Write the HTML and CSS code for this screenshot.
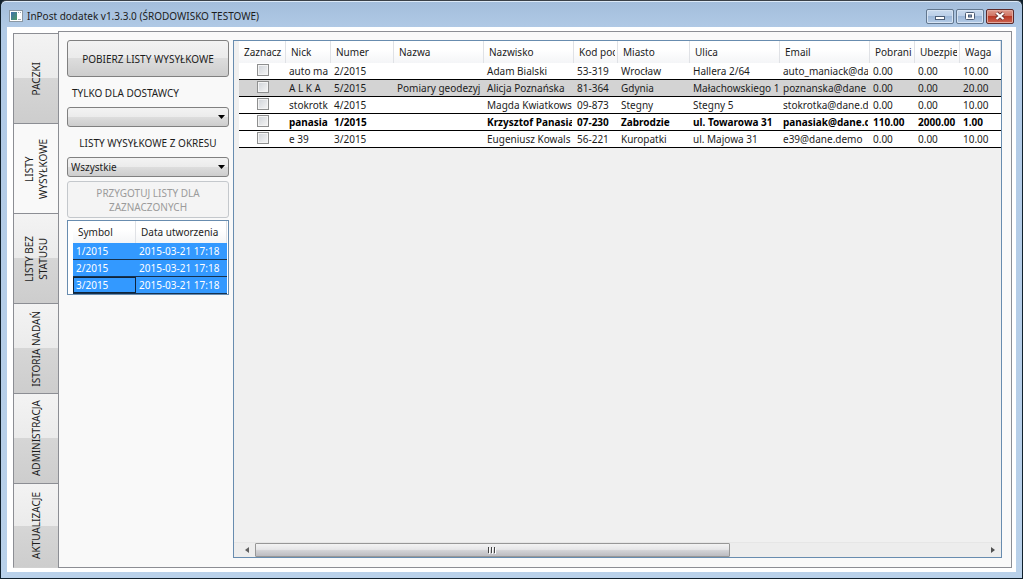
FILE: index.html
```html
<!DOCTYPE html>
<html lang="pl">
<head>
<meta charset="utf-8">
<title>InPost dodatek</title>
<link rel="stylesheet" href="styles.css">
</head>
<body>
<div class="window">
  <header class="titlebar">
    <svg class="app-icon" width="14" height="12" viewBox="0 0 14 12" aria-hidden="true">
      <defs><linearGradient id="app" x1="0" y1="0" x2="1" y2="1"><stop offset="0" stop-color="#3f6fae"/><stop offset="1" stop-color="#4c9a62"/></linearGradient></defs>
      <rect x=".5" y=".5" width="13" height="11" fill="#fff" stroke="#8b98a4"/>
      <rect x="2" y="2" width="6" height="8" fill="url(#app)"/>
      <path d="M9 2h1v1H9zM11 2h1v1h-1zM9 9h3v1H9z" fill="#9aa7b5"/>
    </svg>
    <h1 class="title">InPost dodatek v1.3.3.0 (ŚRODOWISKO TESTOWE)</h1>
    <div class="window-buttons">
      <button class="window-button" aria-label="Minimalizuj"><svg width="12" height="10" viewBox="0 0 12 10"><rect x="1.5" y="5.5" width="9" height="3" fill="#fff" stroke="#4b5d76"/></svg></button>
      <button class="window-button" aria-label="Maksymalizuj"><svg width="12" height="10" viewBox="0 0 12 10"><rect x="1.5" y="1.5" width="9" height="7" rx="1" fill="#fff" stroke="#4b5d76"/><rect x="4.5" y="4" width="3" height="2" fill="#8fa9cb" stroke="#4b5d76"/></svg></button>
      <button class="window-button close" aria-label="Zamknij"><svg width="12" height="10" viewBox="0 0 12 10"><path d="M2.500 2l7 6M9.500 2l-7 6" stroke="#6d3432" stroke-width="4"/><path d="M2.500 2l7 6M9.500 2l-7 6" stroke="#fff" stroke-width="2.200"/></svg></button>
    </div>
  </header>
  <main class="client">
    <nav class="tabs" role="tablist">
      <button class="tab" role="tab"><span class="tab-text">PACZKI</span></button>
      <button class="tab selected" role="tab" aria-selected="true"><span class="tab-text">LISTY<br>WYSYŁKOWE</span></button>
      <button class="tab" role="tab"><span class="tab-text">LISTY BEZ<br>STATUSU</span></button>
      <button class="tab" role="tab"><span class="tab-text">ISTORIA NADAŃ</span></button>
      <button class="tab" role="tab"><span class="tab-text">ADMINISTRACJA</span></button>
      <button class="tab" role="tab"><span class="tab-text">AKTUALIZACJE</span></button>
    </nav>
    <section class="page">
      <aside class="sidebar">
        <button class="action">POBIERZ LISTY WYSYŁKOWE</button>
        <label class="field-label" for="supplier">TYLKO DLA DOSTAWCY</label>
        <div class="combo"><select id="supplier"><option></option></select></div>
        <label class="field-label centered" for="period">LISTY WYSYŁKOWE Z OKRESU</label>
        <div class="combo"><select id="period"><option>Wszystkie</option></select></div>
        <button class="action prepare" disabled>PRZYGOTUJ LISTY DLA ZAZNACZONYCH</button>
        <div class="list-box">
          <table class="grid list">
            <colgroup><col class="w-symbol"><col></colgroup>
            <thead><tr><th>Symbol</th><th>Data utworzenia</th></tr></thead>
            <tbody>
              <tr><td>1/2015</td><td>2015-03-21 17:18</td></tr>
              <tr><td>2/2015</td><td>2015-03-21 17:18</td></tr>
              <tr><td class="current">3/2015</td><td>2015-03-21 17:18</td></tr>
            </tbody>
          </table>
        </div>
      </aside>
      <div class="grid-box">
        <div class="grid-area">
          <table class="grid shipments">
            <colgroup><col class="w-check"><col class="w-small"><col class="w-number"><col class="w-wide"><col class="w-wide"><col class="w-code"><col class="w-city"><col class="w-wide"><col class="w-wide"><col class="w-small"><col class="w-small"><col></colgroup>
            <thead><tr><th>Zaznacz</th><th>Nick</th><th>Numer</th><th>Nazwa</th><th>Nazwisko</th><th><div class="clip">Kod poc</div></th><th>Miasto</th><th>Ulica</th><th>Email</th><th><div class="clip">Pobrani</div></th><th><div class="clip">Ubezpie</div></th><th>Waga</th></tr></thead>
            <tbody>
              <tr><td class="check"><input type="checkbox" aria-label="Zaznacz 2/2015"></td><td><div class="clip">auto ma</div></td><td>2/2015</td><td></td><td>Adam Bialski</td><td>53-319</td><td>Wrocław</td><td>Hallera 2/64</td><td><div class="clip">auto_maniack@da</div></td><td>0.00</td><td>0.00</td><td>10.00</td></tr>
              <tr class="shaded"><td class="check"><input type="checkbox" aria-label="Zaznacz 5/2015"></td><td>A L K A</td><td>5/2015</td><td><div class="clip">Pomiary geodezyj</div></td><td>Alicja Poznańska</td><td>81-364</td><td>Gdynia</td><td><div class="clip">Małachowskiego 1</div></td><td><div class="clip">poznanska@dane</div></td><td>0.00</td><td>0.00</td><td>20.00</td></tr>
              <tr><td class="check"><input type="checkbox" aria-label="Zaznacz 4/2015"></td><td><div class="clip">stokrotk</div></td><td>4/2015</td><td></td><td><div class="clip">Magda Kwiatkows</div></td><td>09-873</td><td>Stegny</td><td>Stegny 5</td><td><div class="clip">stokrotka@dane.d</div></td><td>0.00</td><td>0.00</td><td>10.00</td></tr>
              <tr class="strong"><td class="check"><input type="checkbox" aria-label="Zaznacz 1/2015"></td><td><div class="clip">panasia</div></td><td>1/2015</td><td></td><td><div class="clip">Krzysztof Panasia</div></td><td>07-230</td><td>Zabrodzie</td><td>ul. Towarowa 31</td><td><div class="clip">panasiak@dane.d</div></td><td>110.00</td><td>2000.00</td><td>1.00</td></tr>
              <tr><td class="check"><input type="checkbox" aria-label="Zaznacz 3/2015"></td><td>e 39</td><td>3/2015</td><td></td><td><div class="clip">Eugeniusz Kowals</div></td><td>56-221</td><td>Kuropatki</td><td>ul. Majowa 31</td><td>e39@dane.demo</td><td>0.00</td><td>0.00</td><td>10.00</td></tr>
            </tbody>
          </table>
        </div>
        <div class="scrollbar">
          <button class="scroll-arrow" aria-label="W lewo"><svg width="4" height="6" viewBox="0 0 4 6"><path d="M4 0v6L0 3z" fill="#606060"/></svg></button>
          <div class="track"><div class="thumb"><svg width="8" height="7" viewBox="0 0 8 7"><path d="M.5 0v6M3.500 0v6M6.500 0v6" stroke="#444"/><path d="M1.500 1v6M4.500 1v6M7.500 1v6" stroke="#fff"/></svg></div></div>
          <button class="scroll-arrow" aria-label="W prawo"><svg width="4" height="6" viewBox="0 0 4 6"><path d="M0 0v6l4-3z" fill="#505050"/></svg></button>
        </div>
      </div>
    </section>
  </main>
</div>
</body>
</html>
```
FILE: styles.css
```css
* { box-sizing: border-box; }
body { margin: 0; background: #10202c; }
body, button, select, input {
  font-family: "Noto Sans", "Open Sans", sans-serif;
  font-size: 10px;
  line-height: 14px;
  color: #1c1c1c;
}
button { margin: 0; padding: 0; }
svg { display: block; }

.window {
  display: flex;
  flex-direction: column;
  height: 100vh;
  padding: 0 6px 6px;
  border: 1px solid #10202c;
  border-top-color: #3a4047;
  border-radius: 6px 6px 0 0;
  background: linear-gradient(#a3bddb, #b1cae6 28px, #b9d1ea);
  box-shadow: inset 0 1px #dce9f7;
}

.titlebar {
  display: flex;
  align-items: center;
  flex: none;
  height: 26px;
  padding: 4px 2px 0 2px;
}
.title {
  flex: 1;
  margin: 0 0 0 4px;
  font-size: 10px;
  font-weight: normal;
}
.window-buttons { display: flex; gap: 2px; }
.window-button {
  display: flex;
  align-items: center;
  justify-content: center;
  width: 28px;
  height: 15px;
  border: 1px solid #62778f;
  border-radius: 2px;
  background: linear-gradient(#c9daee, #b9cee8 50%, #9cb7d8 50%, #b3cbe6);
  box-shadow: inset 0 0 0 1px #d6e4f4;
}
.window-button.close {
  border-color: #5c2a2a;
  background: linear-gradient(#dd9a8c, #cf7160 50%, #b93a26 50%, #cd6350);
  box-shadow: inset 0 0 0 1px #e3a99d;
}

.client {
  display: flex;
  flex: 1;
  min-height: 0;
  padding: 4px 4px 4px 6px;
  background: #fff;
}
.tabs {
  display: flex;
  flex-direction: column;
  flex: none;
  width: 45px;
  padding-top: 2px;
}
.tab {
  display: flex;
  align-items: center;
  justify-content: center;
  flex: 0 0 90px;
  min-height: 0;
  border: 1px solid #8c8e94;
  border-right: 0;
  border-bottom: 0;
  background: linear-gradient(#f3f3f3, #ebebeb 50%, #d6d6d6 50%, #cdcdcd);
  overflow: hidden;
}
.tab.selected { background: #f9f9f9; }
.tab:last-child { flex-shrink: 1; border-bottom: 1px solid #d0d0d0; }
.tab-text {
  writing-mode: vertical-rl;
  transform: rotate(180deg);
  white-space: nowrap;
}

.page {
  display: flex;
  flex: 1;
  gap: 4px;
  min-width: 0;
  padding: 8px 9px 9px 8px;
  border: 1px solid #8c8e94;
  background: #f9f9f9;
}
.sidebar {
  display: flex;
  flex-direction: column;
  flex: none;
  width: 162px;
}
.action {
  height: 37px;
  border: 1px solid #808080;
  border-radius: 3px;
  background: linear-gradient(#f3f3f3, #ebebeb 50%, #dddddd 50%, #cdcdcd);
}
.action.prepare {
  margin: 4px 0 2px;
  padding: 0 24px;
  border-color: #c4c8cc;
  background: #f4f4f4;
  color: #9b9b9b;
}
.field-label { padding: 9px 5px 7px; }
.field-label.centered { text-align: center; }
.combo { position: relative; height: 20px; }
.combo::after {
  content: "";
  position: absolute;
  top: 8px;
  right: 4px;
  width: 7px;
  height: 4px;
  background: #000;
  clip-path: polygon(0 0, 100% 0, 50% 100%);
  pointer-events: none;
}
.combo select {
  display: block;
  width: 100%;
  height: 100%;
  padding: 0 16px 0 3px;
  border: 1px solid #808080;
  border-radius: 3px;
  background: linear-gradient(#f3f3f3, #ebebeb 50%, #dddddd 50%, #cdcdcd);
  appearance: none;
}

.grid {
  width: 100%;
  border-collapse: separate;
  border-spacing: 0;
  table-layout: fixed;
}
.grid th, .grid td {
  text-align: left;
  white-space: nowrap;
}
.clip { overflow: hidden; }
.grid th {
  height: 22px;
  padding: 0 2px 0 5px;
  border-right: 1px solid #e0e2e6;
  background: linear-gradient(#fff, #fff 40%, #f4f5f7);
  font-weight: normal;
}
.grid td {
  height: 17px;
  padding: 1px 2px 0 3px;
  border-bottom: 1px solid #000;
  background: #fff;
  background-clip: padding-box;
  line-height: 15px;
}
.list-box {
  padding: 0 1px 0 5px;
  border: 1px solid #688caf;
  background: #fff;
}
.list td {
  border-color: #16324f;
  background: #3399ff;
  color: #fff;
}
.list td.current { box-shadow: inset 0 0 0 1px #10243a; }
.w-symbol { width: 63px; }

.grid-box {
  display: flex;
  flex-direction: column;
  flex: 1;
  min-width: 0;
  border: 1px solid #688caf;
  background: #f0f0f0;
}
.grid-area { flex: 1; padding-left: 5px; min-height: 0; overflow: hidden; }
.shipments tr.shaded td { background: #d3d3d3; }
.shipments tr.strong td { font-weight: bold; color: #000; }
.shipments td.check { padding: 0 0 2px 1px; text-align: center; }
.check input {
  display: block;
  width: 12px;
  height: 12px;
  margin: 0 auto;
  border: 1px solid #8e8f8f;
  background: linear-gradient(135deg, #cfd3d8, #f6f6f6);
  box-shadow: inset 0 0 0 1px #f4f4f4;
  appearance: none;
}
.w-check { width: 47px; }
.w-small { width: 45px; }
.w-code { width: 44px; }
.w-number { width: 63px; }
.w-wide { width: 90px; }
.w-city { width: 72px; }

.scrollbar {
  display: flex;
  flex: none;
  height: 15px;
  padding-left: 5px;
  border-top: 1px solid #e6e6e6;
  background: #ededed;
}
.scroll-arrow {
  display: flex;
  align-items: center;
  justify-content: center;
  width: 16px;
  border: 0;
  background: none;
}
.track { flex: 1; }
.thumb {
  display: flex;
  align-items: center;
  justify-content: center;
  width: 65%;
  height: 100%;
  border: 1px solid #979797;
  border-radius: 1px;
  background: linear-gradient(#f3f3f3, #e6e6e8 45%, #d2d2d5 55%, #bcbcc1);
}
```
